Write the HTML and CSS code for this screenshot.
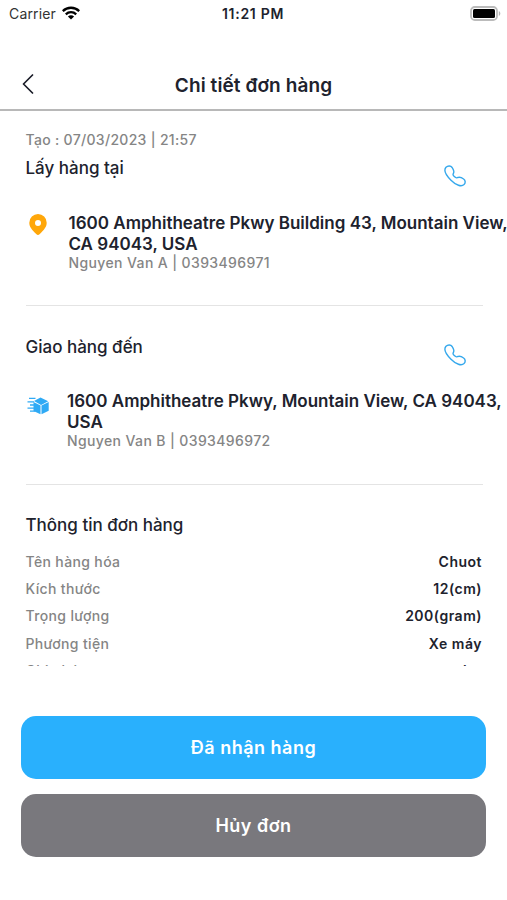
FILE: index.html
```html
<!DOCTYPE html>
<html lang="vi">
<head>
<meta charset="utf-8">
<title>Chi tiết đơn hàng</title>
<link rel="stylesheet" href="styles.css">
</head>
<body>
<div class="screen">
  <div class="status">
    <div class="carrier"><span>Carrier</span>
      <svg class="wifi" width="18" height="14" viewBox="0 0 18 14"><g fill="none" stroke="#000" stroke-width="2.3"><path d="M.8 5.1C5.4.6 12.6.6 17.2 5.1"/><path d="M3.8 8.3c2.9-2.8 7.5-2.8 10.4 0"/></g><path d="M9 13.6 5.9 10.5c1.7-1.6 4.500-1.600 6.200 0z"/></svg>
    </div>
    <div class="clock">11:21 PM</div>
    <svg class="battery" width="31" height="15" viewBox="0 0 31 15"><rect x="1" y="1" width="26" height="13" rx="3.800" fill="#fff" stroke="#bbb" stroke-width="1.800"/><rect x="3" y="3" width="22" height="9" rx="1.500" fill="#000"/><path d="M28.800 5v5c2-.8 2-4.200 0-5z" fill="#b5b5b5"/></svg>
  </div>
  <header class="header">
    <svg class="back" width="12" height="20" viewBox="0 0 12 20" fill="none" stroke="#1a1c28" stroke-width="1.700" stroke-linecap="round" stroke-linejoin="round"><path d="M10.500 1 1.500 10l9 9"/></svg>
    <h1 class="title">Chi tiết đơn hàng</h1>
  </header>
  <main class="content">
    <p class="created">Tạo : 07/03/2023 | 21:57</p>
    <section class="stop pickup">
      <div class="stop-head"><h2>Lấy hàng tại</h2>
        <svg class="phone" width="22" height="22" viewBox="0 0 22 22" fill="none" stroke="#35a8ec" stroke-width="1.400" stroke-linejoin="round"><path d="M2 2.300C3.900.4 6.800.6 8.100 2.500L9.300 4.700C10.200 6.500 9.900 7.700 9.200 8.800C8.700 9.700 9.100 10.400 10.300 11.600C11.500 12.800 12.300 13.100 13.200 12.700C14.400 12.100 15.800 12 17.300 12.700L19.600 14C21.500 15.300 21.700 17.800 20 19.600C17.400 22.100 12.200 20.400 7 15.200C1.800 10-.4 5 2 2.300Z"/></svg>
      </div>
      <div class="address">
        <svg class="pin" width="18" height="21" viewBox="0 0 18 21"><path fill="#ffa70a" fill-rule="evenodd" d="M9 0a8.700 8.700 0 0 0-8.700 8.700c0 4.200 2.600 7 6.900 11.300a2.500 2.500 0 0 0 3.600 0c4.300-4.300 6.900-7.100 6.900-11.300A8.700 8.700 0 0 0 9 0zm0 5.900a3 3 0 1 1 0 6 3 3 0 0 1 0-6z"/></svg>
        <div class="place"><p class="street">1600 Amphitheatre Pkwy Building 43, Mountain View,<br>CA 94043, USA</p><p class="person">Nguyen Van A | 0393496971</p></div>
      </div>
    </section>
    <section class="stop dropoff">
      <div class="stop-head"><h2>Giao hàng đến</h2>
        <svg class="phone" width="22" height="22" viewBox="0 0 22 22" fill="none" stroke="#35a8ec" stroke-width="1.400" stroke-linejoin="round"><path d="M2 2.300C3.900.4 6.800.6 8.100 2.500L9.300 4.700C10.200 6.500 9.900 7.700 9.200 8.800C8.700 9.700 9.100 10.400 10.300 11.600C11.500 12.800 12.300 13.100 13.200 12.700C14.400 12.100 15.800 12 17.300 12.700L19.600 14C21.500 15.300 21.700 17.800 20 19.600C17.400 22.100 12.200 20.400 7 15.200C1.800 10-.4 5 2 2.300Z"/></svg>
      </div>
      <div class="address">
        <svg class="box" width="22" height="18" viewBox="0 0 22 18"><g fill="#2faaf5"><path d="M7 3.900 13.500.5l7.700 3.700-7.100 3.700z"/><path d="M6.500 5l7 3.500v8.800L6.500 14z"/><path d="M14.500 8.500 21.700 4.900v8.800l-7.200 3.600z"/></g><g fill="none" stroke="#2faaf5" stroke-width="1.300"><path d="M2 1.400h6.500M.5 4.800H7M3 8H8M.5 11.100H8M3 14.100h5"/></g></svg>
        <div class="place"><p class="street">1600 Amphitheatre Pkwy, Mountain View, CA 94043,<br>USA</p><p class="person">Nguyen Van B | 0393496972</p></div>
      </div>
    </section>
    <section class="info">
      <h2>Thông tin đơn hàng</h2>
      <dl>
        <div class="row"><dt>Tên hàng hóa</dt><dd>Chuot</dd></div>
        <div class="row"><dt>Kích thước</dt><dd>12(cm)</dd></div>
        <div class="row"><dt>Trọng lượng</dt><dd>200(gram)</dd></div>
        <div class="row"><dt>Phương tiện</dt><dd>Xe máy</dd></div>
        <div class="row"><dt>Ghi chú</dt><dd>nier</dd></div>
      </dl>
    </section>
  </main>
  <footer class="actions">
    <button class="btn primary">Đã nhận hàng</button>
    <button class="btn cancel">Hủy đơn</button>
  </footer>
</div>
</body>
</html>
```
FILE: styles.css
```css
* { box-sizing: border-box; margin: 0; padding: 0; }
body { background: #fff; font-family: Inter, "Liberation Sans", sans-serif; color: #20222d; }
svg { display: block; flex: none; }
.screen { width: 507px; height: 900px; display: flex; flex-direction: column; overflow: hidden; }
.status { height: 28px; display: grid; grid-template-columns: 1fr auto 1fr; align-items: center; padding: 0 6px 0 9px; font-size: 14px; }
.carrier { display: flex; align-items: center; gap: 6px; color: #333; letter-spacing: .15px; line-height: 16px; margin-top: -1px; }
.wifi { margin-top: -1px; }
.clock { font-weight: 600; font-size: 14px; letter-spacing: .7px; margin: -2px 2px 0 -2px; }
.battery { justify-self: end; margin-top: -1px; }
.header { height: 83px; border-bottom: 2px solid #b8b8b8; padding: 32px 22px 0; display: grid; grid-template-columns: 12px 1fr 12px; align-items: center; }
.title { font-size: 19px; font-weight: 600; text-align: center; line-height: 28px; letter-spacing: .1px; padding-top: 2px; }
.back { margin-top: -1px; }
.content { height: 555px; overflow: hidden; padding: 19px 0 0 25.5px; }
.created { font-size: 14px; line-height: 20px; font-weight: 500; color: #858585; letter-spacing: .31px; }
h2 { font-size: 17px; line-height: 22px; font-weight: 500; }
.stop { width: 457px; height: 156px; border-bottom: 1px solid #e4e4e4; }
.stop-head { display: flex; justify-content: space-between; padding: 7px 16.5px 0 0; }
.dropoff { height: 179px; padding-top: 23px; }
.phone { margin-top: 8px; }
.address { display: flex; margin-top: 26px; width: 482px; }
.dropoff .address { margin-top: 25.5px; }
.dropoff .phone { margin-top: 7.5px; }
.pin { margin: 1px 22px 0 3px; }
.box { margin: 6px 18px 0 1.5px; }
.street { font-size: 17px; line-height: 21px; font-weight: 600; white-space: nowrap; }
.person { font-size: 14px; line-height: 18px; font-weight: 500; color: #858585; letter-spacing: .38px; margin-top: -1px; }
.info { width: 456px; padding-top: 29px; }
.info dl { margin-top: 12px; }
.row { display: flex; justify-content: space-between; font-size: 14px; line-height: 27.2px; height: 27.2px; }
dt { font-weight: 500; color: #858585; letter-spacing: .36px; }
dd { font-weight: 600; letter-spacing: .5px; margin-right: -.5px; }
.actions { padding: 50px 21px 0; display: grid; gap: 15px; }
.btn { height: 63px; border: 0; border-radius: 15px; color: #fff; font: 600 18px Inter, "Liberation Sans", sans-serif; letter-spacing: .5px; }
.primary { background: #29b0fd; }
.cancel { background: #79787d; }
```
